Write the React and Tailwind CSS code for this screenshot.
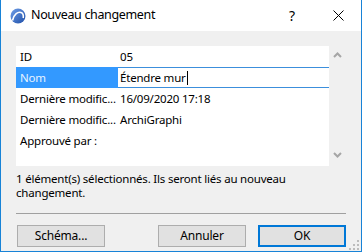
const rows = [
  { label: 'ID', value: '05' },
  { label: 'Nom', value: 'Étendre mur', editing: true },
  { label: 'Dernière modific...', value: '16/09/2020 17:18' },
  { label: 'Dernière modific...', value: 'ArchiGraphi' },
  { label: 'Approuvé par :', value: '' },
];

const AppIcon = () => (
  <svg width="16" height="16" viewBox="0 0 16 16">
    <defs>
      <linearGradient id="ac" x1="0" y1="0" x2="1" y2="1">
        <stop offset="0" stopColor="#6f9ee8" />
        <stop offset="1" stopColor="#1f4fa8" />
      </linearGradient>
    </defs>
    <circle cx="8" cy="8" r="7.5" fill="url(#ac)" />
    <path d="M2.5 12.5 C4 6 8 3.5 11 4.5 C13 5.2 13.6 7.5 13.2 10" fill="none" stroke="#fff" strokeWidth="1.6" />
  </svg>
);

const Chevron = ({ down }) => (
  <svg width="9" height="6" viewBox="0 0 9 6">
    <path d={down ? 'M1 1 L4.5 4.5 L8 1' : 'M1 5 L4.5 1.5 L8 5'} fill="none" stroke="#a6a6a6" strokeWidth="2" />
  </svg>
);

const Button = ({ children, primary }) => (
  <button
    className={`w-[88px] h-[22px] bg-[#e1e1e1] text-[12px] tracking-[-0.2px] text-black flex items-center justify-center ${
      primary ? 'border-2 border-[#0078d7]' : 'border border-[#adadad]'
    }`}
  >
    {children}
  </button>
);

export default function App() {
  return (
    <div
      className="w-[362px] h-[252px] flex flex-col border-x border-b border-[#1883d7] bg-[#f0f0f0] overflow-hidden"
      style={{ fontFamily: '"Noto Sans", "Open Sans", sans-serif' }}
    >
      {/* Title bar */}
      <div className="h-[31px] bg-white flex items-center shrink-0">
        <div className="ml-[9px] mr-[5px] flex items-center">
          <AppIcon />
        </div>
        <span className="text-[12.5px] tracking-[-0.35px] text-black">Nouveau changement</span>
        <span className="ml-auto text-[14px] text-black mr-[38px]">?</span>
        <svg width="11" height="11" viewBox="0 0 11 11" className="mr-[17px]">
          <path d="M0.5 0.5 L10.5 10.5 M10.5 0.5 L0.5 10.5" stroke="#000" strokeWidth="1" />
        </svg>
      </div>

      {/* Body */}
      <div className="flex-1 flex flex-col pl-[15px] pr-[15px] text-[11.5px] tracking-[-0.2px]">
        <div className="mt-[15px] flex h-[120px]">
          <div className="w-[313px] bg-white flex flex-col">
            {rows.map((r, i) => (
              <div key={i} className="h-[21px] flex leading-[21px] text-black">
                <div
                  className={`w-[102px] pl-[4px] whitespace-nowrap overflow-hidden ${
                    r.editing ? 'bg-[#3399ff] text-[#e8f3ff]' : ''
                  }`}
                >
                  {r.label}
                </div>
                {r.editing ? (
                  <div className="flex-1 border-y border-[#3c8fdc] pl-[2px] flex items-center leading-[19px]">
                    <span>{r.value}</span>
                    <span className="w-px h-[14px] bg-black ml-px" />
                  </div>
                ) : (
                  <div className="flex-1 pl-[2px] whitespace-nowrap">{r.value}</div>
                )}
              </div>
            ))}
          </div>
          <div className="w-[17px] flex flex-col items-center justify-between pt-[6px] pb-[8px]">
            <Chevron />
            <Chevron down />
          </div>
        </div>

        <p className="mt-[6px] leading-[14px] text-black pr-[40px]">
          1 élément(s) sélectionnés. Ils seront liés au nouveau changement.
        </p>

        <div className="mt-[13px] h-px bg-[#a0a0a0]" />

        <div className="mt-[11px] flex items-center">
          <div className="ml-[1px]">
            <Button>Schéma...</Button>
          </div>
          <div className="ml-auto mr-[12px]">
            <Button>Annuler</Button>
          </div>
          <Button primary>OK</Button>
        </div>
      </div>

      {/* Resize grip */}
      <div className="relative h-0">
        <svg width="10" height="10" viewBox="0 0 10 10" className="absolute right-[2px] bottom-[1px]">
          {[[8, 0], [8, 4], [4, 4], [8, 8], [4, 8], [0, 8]].map(([x, y], i) => (
            <rect key={i} x={x} y={y} width="2" height="2" fill="#bcbcbc" />
          ))}
        </svg>
      </div>
    </div>
  );
}
